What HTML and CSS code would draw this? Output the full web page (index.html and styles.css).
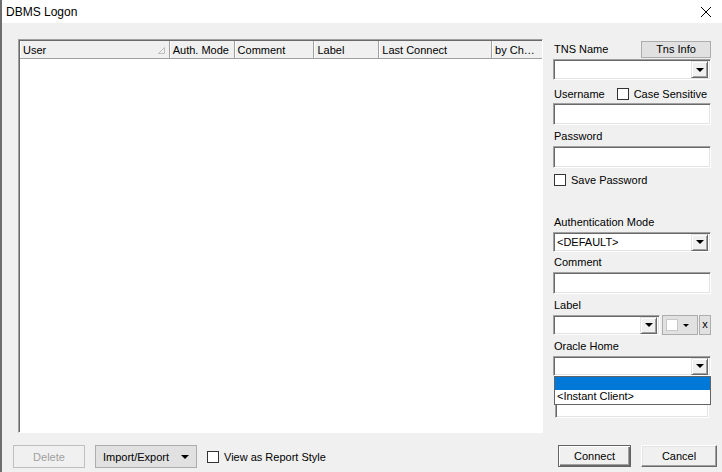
FILE: index.html
```html
<!DOCTYPE html>
<html>
<head>
<meta charset="utf-8">
<link rel="stylesheet" href="styles.css">
</head>
<body>
<div class="window">
  <div class="titlebar">
    <span class="title">DBMS Logon</span>
    <svg class="close" width="12" height="12" viewBox="0 0 12 12"><path d="M1 1 L11 11 M11 1 L1 11" stroke="#000" stroke-width="1" fill="none"/></svg>
  </div>
  <div class="content">
    <div class="main">
      <div class="grid">
        <div class="ghead">
          <div class="gcol c-user"><span>User</span><svg class="sort" width="8" height="8" viewBox="0 0 8 8"><path d="M0.5 7.5 L6.5 7.5 L6.5 1.5 Z" fill="none" stroke="#bdbdbd" stroke-width="1"/></svg></div>
          <div class="gcol c-auth">Auth. Mode</div>
          <div class="gcol c-comment">Comment</div>
          <div class="gcol c-label">Label</div>
          <div class="gcol c-last">Last Connect</div>
          <div class="gcol c-by">by Ch…</div>
        </div>
        <div class="gbody"></div>
      </div>
      <div class="side">
        <div class="row r-tns">
          <span class="lbl">TNS Name</span>
          <button class="flatbtn tnsinfo">Tns Info</button>
        </div>
        <div class="combo m-tnscombo"><span class="ctext"></span><span class="dbtn"><i class="arrow"></i></span></div>
        <div class="row r-user">
          <span class="lbl">Username</span>
          <span class="chkwrap"><span class="chk"></span><span>Case Sensitive</span></span>
        </div>
        <div class="edit m-useredit"></div>
        <div class="lbl m-pwlbl">Password</div>
        <div class="edit m-pwedit"></div>
        <div class="chkwrap m-savepw"><span class="chk"></span><span>Save Password</span></div>
        <div class="lbl m-authlbl">Authentication Mode</div>
        <div class="combo m-authcombo"><span class="ctext">&lt;DEFAULT&gt;</span><span class="dbtn"><i class="arrow"></i></span></div>
        <div class="lbl m-commentlbl">Comment</div>
        <div class="edit m-commentedit"></div>
        <div class="lbl m-labellbl">Label</div>
        <div class="row r-label">
          <div class="combo labelcombo"><span class="ctext"></span><span class="dbtn"><i class="arrow"></i></span></div>
          <div class="colorbtn"><span class="swatch"></span><i class="arrow small"></i></div>
          <div class="xbtn">x</div>
        </div>
        <div class="lbl m-ohlbl">Oracle Home</div>
        <div class="ohwrap">
          <div class="combo ohcombo"><span class="ctext"></span><span class="dbtn"><i class="arrow"></i></span></div>
          <div class="droplist">
            <div class="ditem sel"></div>
            <div class="ditem">&lt;Instant Client&gt;</div>
          </div>
        </div>
        <div class="edit m-hiddenedit"></div>
      </div>
    </div>
    <div class="footer">
      <div class="fleft">
        <button class="flatbtn delete">Delete</button>
        <button class="flatbtn impexp"><span>Import/Export</span><i class="arrow"></i></button>
        <span class="chkwrap"><span class="chk"></span><span>View as Report Style</span></span>
      </div>
      <div class="fright">
        <button class="rbtn connect">Connect</button>
        <button class="rbtn cancel">Cancel</button>
      </div>
    </div>
  </div>
</div>
</body>
</html>
```

FILE: styles.css
```css
* { box-sizing: border-box; }
html, body { margin: 0; padding: 0; }
body {
  width: 722px;
  height: 472px;
  overflow: hidden;
  font-family: "Liberation Sans", Arial, sans-serif;
  font-size: 11px;
  color: #000;
  background: #f0f0f0;
}
.window {
  width: 722px;
  height: 472px;
  display: flex;
  flex-direction: column;
  border-left: 2px solid #6e6e6e;
}
.titlebar {
  height: 23px;
  background: #fff;
  display: flex;
  align-items: center;
  justify-content: space-between;
  padding: 0 10px 0 4px;
}
.title { font-size: 12px; }
.close { display: block; margin-top: 1px; }
.content {
  flex: 1;
  display: flex;
  flex-direction: column;
  background: #f0f0f0;
}
.main {
  display: flex;
  gap: 10px;
  padding: 16px 0 0 16px;
  height: 410px;
}
.grid {
  width: 525px;
  height: 394px;
  display: flex;
  flex-direction: column;
  border: 1px solid;
  border-color: #a0a0a0 #ffffff #ffffff #a0a0a0;
  box-shadow: inset 1px 1px 0 #696969, inset -1px -1px 0 #e3e3e3;
  padding: 1px 0 0 1px;
  background: #fff;
}
.ghead {
  display: flex;
  height: 18px;
  background: #f0f0f0;
  border-bottom: 1px solid #a0a0a0;
}
.gcol {
  height: 17px;
  line-height: 16px;
  padding-left: 2px;
  border-left: 1px solid #fff;
  border-right: 1px solid #a0a0a0;
  white-space: nowrap;
  overflow: hidden;
  display: flex;
  align-items: center;
  justify-content: space-between;
}
.c-user { width: 150px; padding-right: 3px; }
.c-auth { width: 65px; }
.c-comment { width: 80px; }
.c-label { width: 65px; }
.c-last { width: 113px; }
.c-by { width: 50px; border-right: none; }
.sort { display: block; }
.gbody { flex: 1; background: #fff; }

.side {
  width: 158px;
  display: flex;
  flex-direction: column;
}
.row { display: flex; align-items: center; justify-content: space-between; }
.lbl { line-height: 14px; height: 14px; white-space: nowrap; }
.r-tns { height: 18px; margin-top: 1px; }
.r-tns .lbl { margin-left: 1px; margin-top: -1px; }
.flatbtn {
  font: inherit;
  color: #000;
  background: #e1e1e1;
  border: 1px solid #adadad;
  padding: 0;
  margin: 0;
}
.tnsinfo { width: 70px; height: 17px; line-height: 14px; }

.combo, .edit {
  position: relative;
  background: #fff;
  border: 1px solid;
  border-color: #a0a0a0 #ffffff #ffffff #a0a0a0;
  box-shadow: inset 1px 1px 0 #696969, inset -1px -1px 0 #e3e3e3;
}
.combo { height: 21px; display: flex; align-items: center; padding: 0 2px 0 3px; justify-content: space-between; }
.ctext { line-height: 14px; }
.dbtn {
  width: 17px;
  height: 17px;
  background: #f0f0f0;
  border: 1px solid;
  border-color: #e3e3e3 #696969 #696969 #e3e3e3;
  box-shadow: inset 1px 1px 0 #fff, inset -1px -1px 0 #a0a0a0;
  display: flex;
  align-items: center;
  justify-content: center;
}
.arrow {
  display: block;
  width: 0;
  height: 0;
  border-left: 4px solid transparent;
  border-right: 4px solid transparent;
  border-top: 4px solid #000;
}
.arrow.small { border-left-width: 3px; border-right-width: 3px; border-top-width: 3px; }
.edit { height: 22px; }

.m-tnscombo { margin-top: 1px; }
.r-user { height: 14px; margin-top: 7px; }
.r-user .lbl { margin-left: 1px; }
.chkwrap { display: flex; align-items: center; gap: 5px; white-space: nowrap; }
.chk {
  display: block;
  width: 12px;
  height: 12px;
  background: #fff;
  border: 1px solid #333;
}
.r-user .chkwrap { margin-right: 4px; gap: 5px; }
.m-useredit { margin-top: 2px; }
.m-pwlbl { margin-top: 4px; margin-left: 1px; }
.m-pwedit { margin-top: 3px; }
.m-savepw { margin-top: 5px; margin-left: 1px; height: 14px; }
.m-authlbl { margin-top: 28px; margin-left: 1px; }
.m-authcombo { margin-top: 3px; height: 20px; }
.m-commentlbl { margin-top: 3px; margin-left: 1px; }
.m-commentedit { margin-top: 3px; }
.m-labellbl { margin-top: 4px; margin-left: 1px; }
.r-label { margin-top: 3px; height: 20px; }
.labelcombo { width: 107px; height: 20px; }
.colorbtn {
  width: 36px;
  height: 20px;
  margin-left: 2px;
  background: #e1e1e1;
  border: 1px solid #adadad;
  display: flex;
  align-items: center;
  padding: 0 0 0 3px;
  gap: 5px;
}
.swatch { width: 12px; height: 12px; background: #fff; border: 1px solid #c8c8c8; }
.xbtn {
  width: 12px;
  height: 20px;
  margin-left: 1px;
  background: #e1e1e1;
  border: 1px solid #adadad;
  line-height: 17px;
  text-align: center;
  font-size: 11px;
}
.m-ohlbl { margin-top: 4px; margin-left: 1px; }
.ohwrap { position: relative; margin-top: 3px; }
.ohcombo { height: 20px; }
.droplist {
  position: absolute;
  left: 1px;
  top: 20px;
  width: 157px;
  height: 29px;
  background: #fff;
  border: 1px solid #646464;
  z-index: 2;
}
.ditem { height: 13px; line-height: 13px; padding-left: 2px; white-space: nowrap; }
.ditem.sel { background: #0078d7; }
.m-hiddenedit { margin-top: 22px; height: 20px; margin-left: 2px; margin-right: 2px; }

.footer {
  display: flex;
  justify-content: space-between;
  padding: 12px 5px 0 11px;
}
.fleft { display: flex; align-items: center; }
.delete {
  width: 72px;
  height: 23px;
  background: #f0f0f0;
  border-color: #bfbfbf;
  color: #a0a0a0;
}
.impexp {
  width: 102px;
  height: 23px;
  margin-left: 10px;
  display: flex;
  align-items: center;
  justify-content: space-between;
  padding: 0 7px 0 7px;
}
.fleft .chkwrap { margin-left: 10px; gap: 5px; }
.fright { display: flex; gap: 10px; }
.rbtn {
  font: inherit;
  color: #000;
  height: 22px;
  background: #f0f0f0;
  padding: 0;
  margin: 0;
  border: 1px solid;
  border-color: #fff #696969 #696969 #fff;
  box-shadow: inset -1px -1px 0 #a0a0a0, inset 1px 1px 0 #e3e3e3;
}
.connect {
  width: 73px;
  border-color: #646464;
  box-shadow: inset 1px 1px 0 #fff, inset -1px -1px 0 #696969, inset -2px -2px 0 #a0a0a0;
}
.cancel { width: 76px; }
```
